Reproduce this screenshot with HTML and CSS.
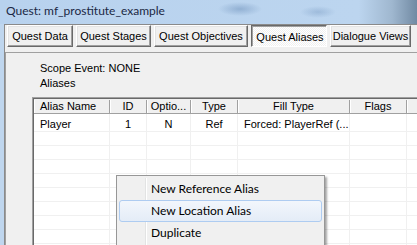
FILE: index.html
```html
<!DOCTYPE html>
<html lang="en">
<head>
    <meta charset="UTF-8">
    <title>Quest: mf_prostitute_example</title>
    <link rel="stylesheet" href="styles.css">
</head>
<body>
    <div class="titlebar">
        <span class="title">Quest: mf_prostitute_example</span>
    </div>

    <div class="client">
        <div class="tabs">
            <button class="tab tab-data">Quest Data</button>
            <button class="tab tab-stages">Quest Stages</button>
            <button class="tab tab-objectives">Quest Objectives</button>
            <button class="tab tab-aliases pressed">Quest Aliases</button>
            <button class="tab tab-dialogue">Dialogue Views</button>
        </div>

        <div class="panel">
            <div class="info">
                <div>Scope Event: NONE</div>
                <div>Aliases</div>
            </div>

            <div class="listview">
                <div class="lv-row lv-header">
                    <div class="cell left">Alias Name</div>
                    <div class="cell">ID</div>
                    <div class="cell">Optio...</div>
                    <div class="cell">Type</div>
                    <div class="cell">Fill Type</div>
                    <div class="cell">Flags</div>
                    <div class="cell"></div>
                </div>
                <div class="lv-row first">
                    <div class="cell left">Player</div>
                    <div class="cell">1</div>
                    <div class="cell">N</div>
                    <div class="cell">Ref</div>
                    <div class="cell left">Forced: PlayerRef (...</div>
                    <div class="cell"></div>
                    <div class="cell"></div>
                </div>
                <div class="lv-row"><div class="cell"></div><div class="cell"></div><div class="cell"></div><div class="cell"></div><div class="cell"></div><div class="cell"></div><div class="cell"></div></div>
                <div class="lv-row"><div class="cell"></div><div class="cell"></div><div class="cell"></div><div class="cell"></div><div class="cell"></div><div class="cell"></div><div class="cell"></div></div>
                <div class="lv-row"><div class="cell"></div><div class="cell"></div><div class="cell"></div><div class="cell"></div><div class="cell"></div><div class="cell"></div><div class="cell"></div></div>
                <div class="lv-row"><div class="cell"></div><div class="cell"></div><div class="cell"></div><div class="cell"></div><div class="cell"></div><div class="cell"></div><div class="cell"></div></div>
                <div class="lv-row"><div class="cell"></div><div class="cell"></div><div class="cell"></div><div class="cell"></div><div class="cell"></div><div class="cell"></div><div class="cell"></div></div>
                <div class="lv-row"><div class="cell"></div><div class="cell"></div><div class="cell"></div><div class="cell"></div><div class="cell"></div><div class="cell"></div><div class="cell"></div></div>
                <div class="lv-row"><div class="cell"></div><div class="cell"></div><div class="cell"></div><div class="cell"></div><div class="cell"></div><div class="cell"></div><div class="cell"></div></div>
                <div class="lv-row"><div class="cell"></div><div class="cell"></div><div class="cell"></div><div class="cell"></div><div class="cell"></div><div class="cell"></div><div class="cell"></div></div>
                <div class="lv-row"><div class="cell"></div><div class="cell"></div><div class="cell"></div><div class="cell"></div><div class="cell"></div><div class="cell"></div><div class="cell"></div></div>
            </div>
        </div>
    </div>

    <!-- context menu over the list -->
    <div class="menu">
        <div class="menu-item">New Reference Alias</div>
        <div class="menu-item active">New Location Alias</div>
        <div class="menu-item">Duplicate</div>
    </div>
</body>
</html>
```

FILE: styles.css
```css
* {
    box-sizing: border-box;
}

html, body {
    margin: 0;
}

body {
    position: relative;
    width: 417px;
    height: 245px;
    overflow: hidden;
    background: #bfd6ee;
    font-family: "Liberation Sans", Arial, sans-serif;
    font-size: 11px;
    color: #000;
}

.titlebar {
    height: 24px;
    padding: 3px 0 0 6px;
    background:
        radial-gradient(ellipse 22px 7px at 240px 9px, rgba(70, 110, 160, 0.35), transparent),
        radial-gradient(ellipse 18px 6px at 318px 12px, rgba(70, 110, 160, 0.25), transparent),
        linear-gradient(to right, #b8d2ee 0%, #bcd5ef 86%, #9fb7cf 94%, #718aa3 100%);
}

.title {
    font-family: Lato, "Noto Sans", sans-serif;
    font-size: 12px;
    line-height: 16px;
    color: #1b2844;
}

.client {
    margin-left: 4px;
    height: 221px;
    border-left: 1px solid #8a8a8a;
    border-top: 1px solid #8a8a8a;
    background: #f0f0f0;
}

.tabs {
    display: flex;
    gap: 3px;
    height: 27px;
    padding-left: 2px;
}

.tab {
    height: 22px;
    padding: 0;
    font-family: inherit;
    font-size: 11px;
    line-height: 20px;
    color: #000;
    text-align: center;
    background: #f0f0f0;
    border: 1px solid;
    border-color: #fff #696969 #696969 #fff;
    box-shadow: inset -1px -1px #a0a0a0, inset 1px 1px #e3e3e3;
}

.tab-data { width: 66px; }
.tab-stages { width: 75px; }
.tab-objectives { width: 94px; }
.tab-aliases { width: 76px; }
.tab-dialogue { width: 81px; }

.tab.pressed {
    padding: 1px 0 0 2px;
    border-color: #696969 #fff #fff #696969;
    box-shadow: inset 1px 1px #a0a0a0;
    background: repeating-conic-gradient(#fff 0 25%, #f0f0f0 0 50%) 0 0 / 2px 2px;
}

.panel {
    height: 194px;
    border-top: 1px solid #a0a0a0;
    border-left: 1px solid #a0a0a0;
    overflow: hidden;
}

.info {
    padding: 8px 0 0 34px;
    line-height: 15px;
}

.listview {
    margin: 6px 0 0 26px;
    width: 420px;
    height: 160px;
    padding: 1px 0 0 1px;
    background: #fff;
    border: 1px solid #a0a0a0;
    box-shadow: inset 1px 1px #696969;
    overflow: hidden;
}

.lv-row {
    display: grid;
    grid-template-columns: 76px 37px 44px 47px 112px 57px 1fr;
    height: 14px;
    border-bottom: 1px solid #f0f0f0;
}

.cell {
    border-right: 1px solid #f0f0f0;
    text-align: center;
    white-space: nowrap;
    overflow: hidden;
}

.cell.left {
    text-align: left;
    padding-left: 6px;
}

.lv-header {
    height: 15px;
    background: #f0f0f0;
    border-bottom: 1px solid #a0a0a0;
    padding-top: 1px;
    line-height: 13px;
}

.lv-header .cell {
    border-right: 1px solid #a0a0a0;
    box-shadow: inset 1px 0 #fff;
}

.lv-row.first {
    height: 18px;
    padding-top: 3px;
    line-height: 14px;
}

.lv-row.first .cell {
    margin-top: -3px;
    padding-top: 3px;
}

.menu {
    position: absolute;
    left: 116px;
    top: 175px;
    width: 209px;
    height: 80px;
    padding: 2px;
    background: #f0f0f0;
    border: 1px solid #979797;
    box-shadow: 2px 2px 2px rgba(0, 0, 0, 0.35);
    font-family: Lato, "Noto Sans", sans-serif;
    font-size: 12px;
}

.menu::before {
    content: "";
    position: absolute;
    left: 28px;
    top: 2px;
    bottom: 0;
    width: 1px;
    background: #e2e3e3;
    box-shadow: 1px 0 #fff;
}

.menu-item {
    position: relative;
    height: 22px;
    padding-left: 31px;
    line-height: 20px;
    border: 1px solid transparent;
    border-radius: 3px;
}

.menu-item.active {
    border-color: #aeccf1;
    background: linear-gradient(#f2f6fc, #e4ecf7);
}
```
